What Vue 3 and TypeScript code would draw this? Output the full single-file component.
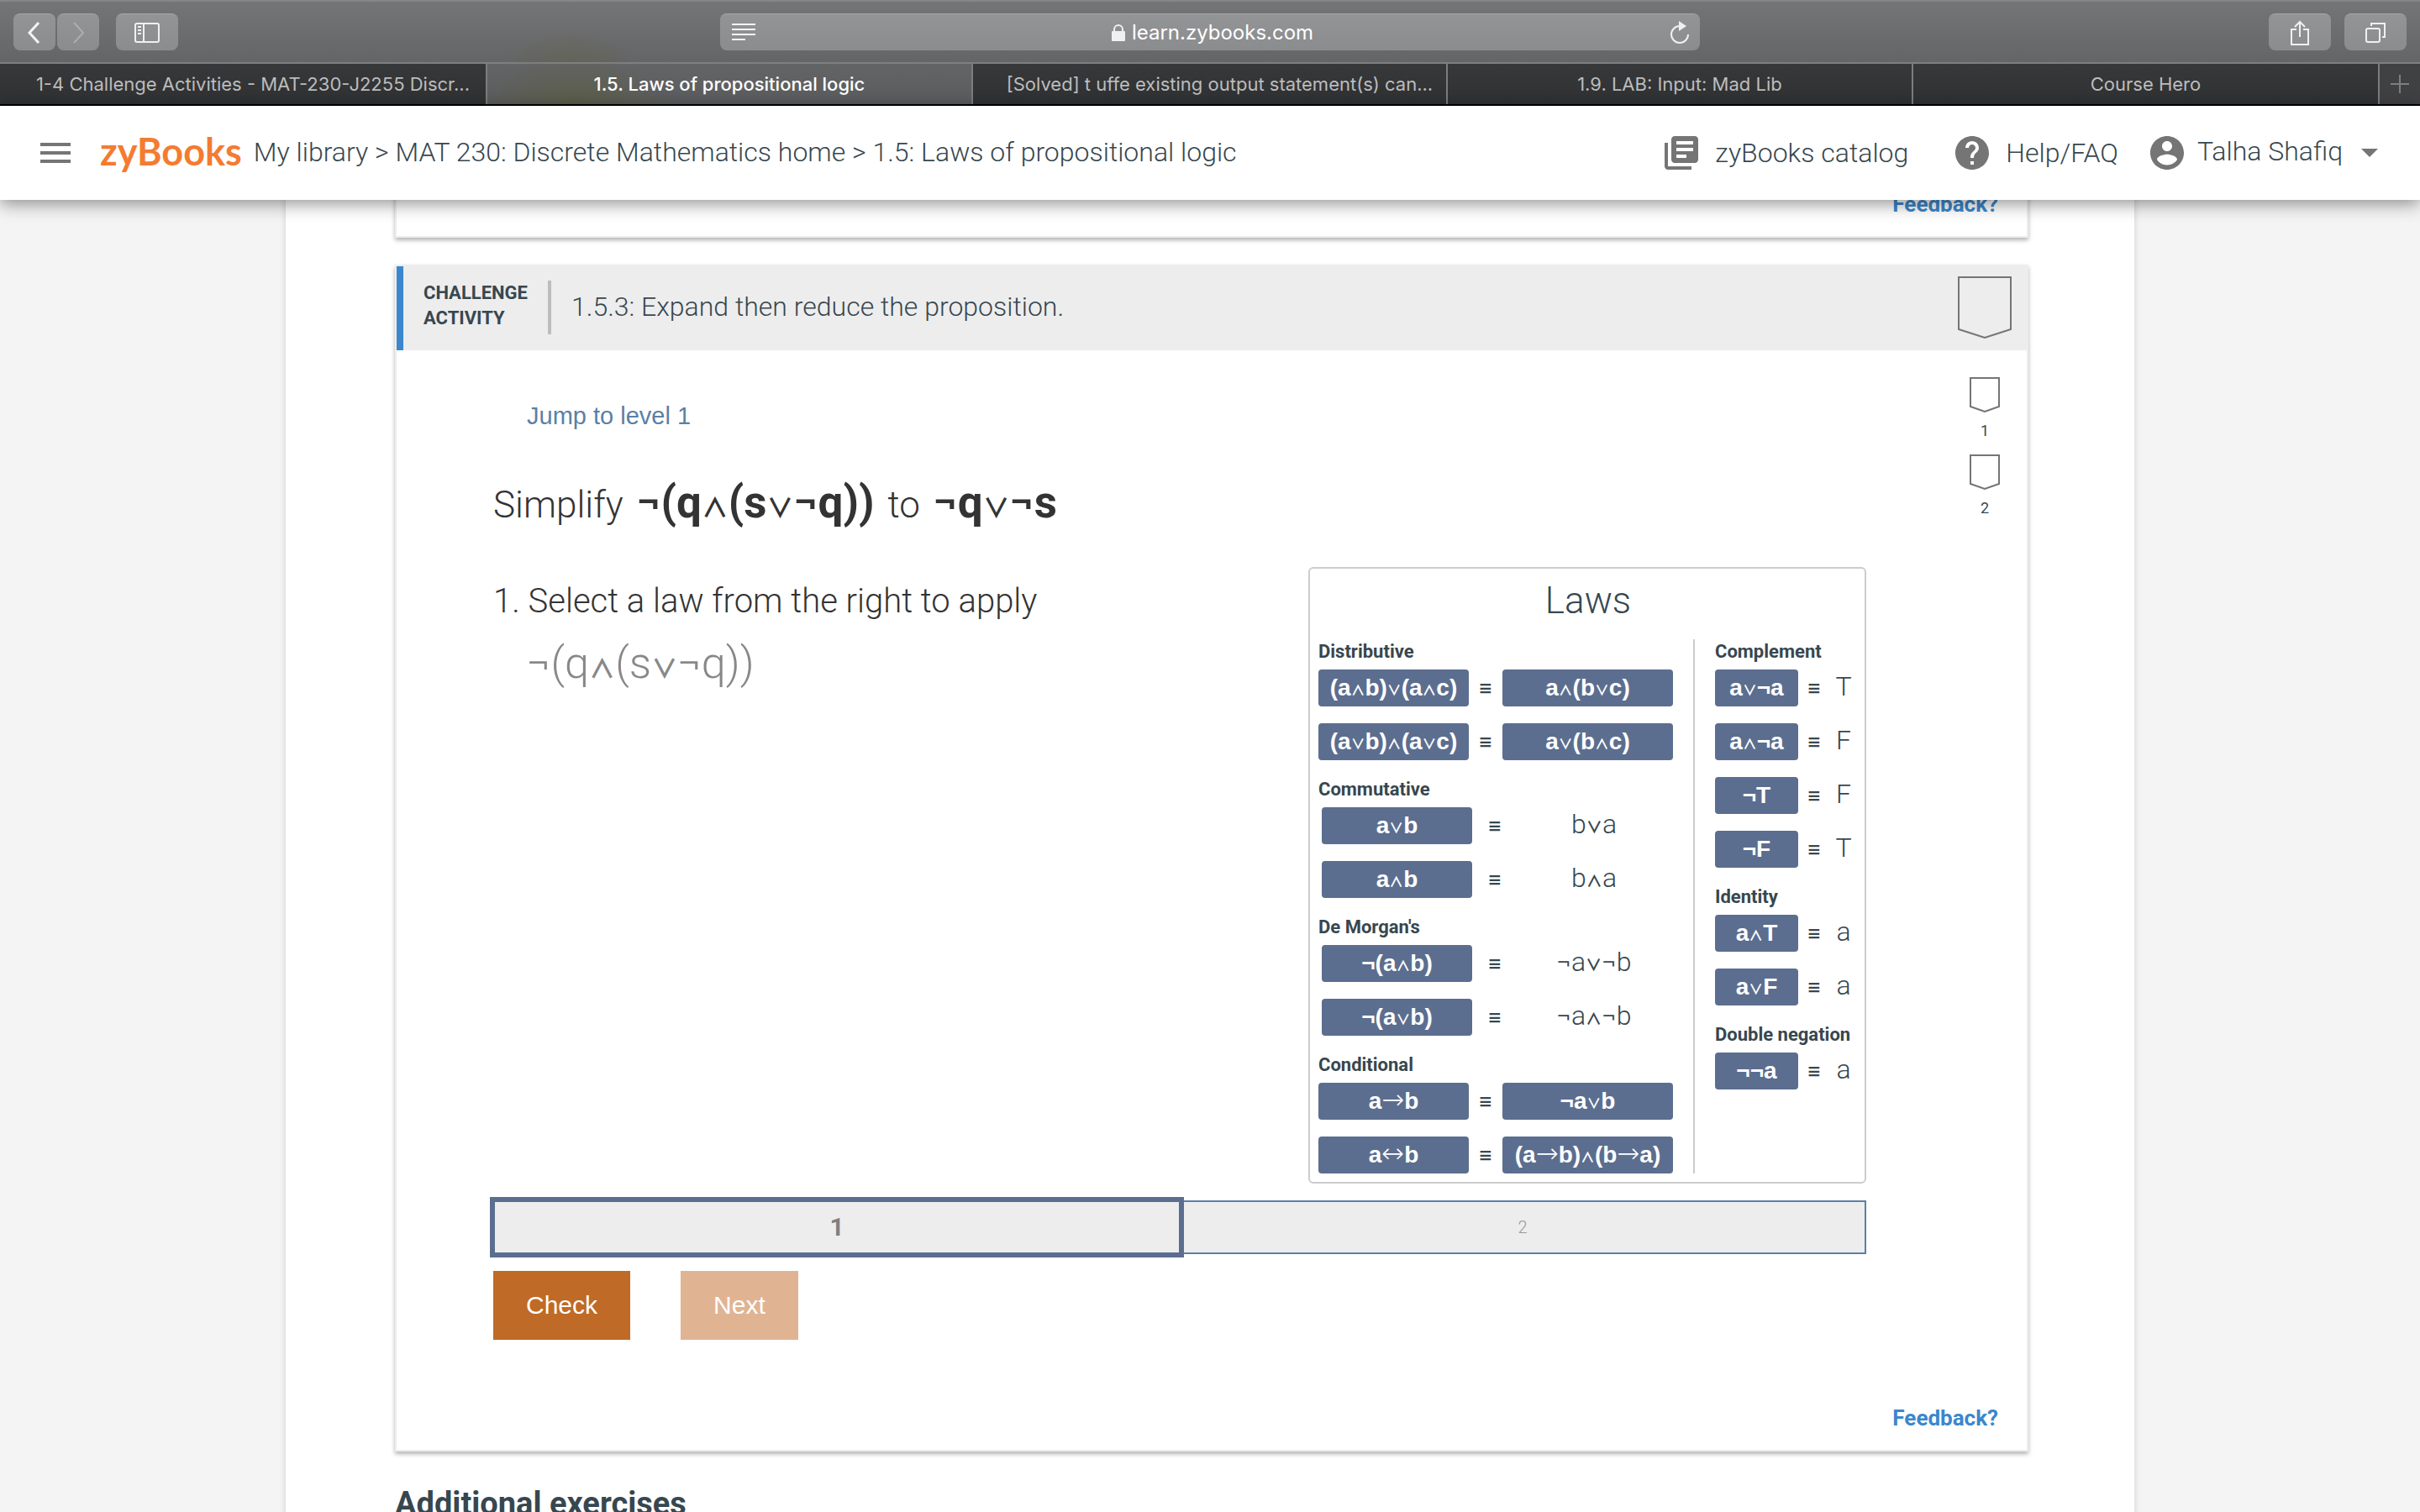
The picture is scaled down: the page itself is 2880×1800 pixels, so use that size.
<script setup lang="ts">
import { h, type FunctionalComponent } from 'vue'

interface Law {
  left: string
  right: string
  rightIsButton?: boolean
}
interface LawGroup {
  name: string
  laws: Law[]
}

const tabs: { title: string; grow: number; active?: boolean; long?: boolean }[] = [
  { title: '1-4 Challenge Activities - MAT-230-J2255 Discr...', grow: 580, long: true },
  { title: '1.5. Laws of propositional logic', grow: 578, active: true },
  { title: '[Solved] t uffe existing output statement(s) can...', grow: 565, long: true },
  { title: '1.9. LAB: Input: Mad Lib', grow: 554 },
  { title: 'Course Hero', grow: 555 },
]

const equivalences: LawGroup[] = [
  {
    name: 'Distributive',
    laws: [
      { left: '(a∧b)∨(a∧c)', right: 'a∧(b∨c)', rightIsButton: true },
      { left: '(a∨b)∧(a∨c)', right: 'a∨(b∧c)', rightIsButton: true },
    ],
  },
  {
    name: 'Commutative',
    laws: [
      { left: 'a∨b', right: 'b∨a' },
      { left: 'a∧b', right: 'b∧a' },
    ],
  },
  {
    name: "De Morgan's",
    laws: [
      { left: '¬(a∧b)', right: '¬a∨¬b' },
      { left: '¬(a∨b)', right: '¬a∧¬b' },
    ],
  },
  {
    name: 'Conditional',
    laws: [
      { left: 'a→b', right: '¬a∨b', rightIsButton: true },
      { left: 'a↔b', right: '(a→b)∧(b→a)', rightIsButton: true },
    ],
  },
]

const simplifications: LawGroup[] = [
  {
    name: 'Complement',
    laws: [
      { left: 'a∨¬a', right: 'T' },
      { left: 'a∧¬a', right: 'F' },
      { left: '¬T', right: 'F' },
      { left: '¬F', right: 'T' },
    ],
  },
  {
    name: 'Identity',
    laws: [
      { left: 'a∧T', right: 'a' },
      { left: 'a∨F', right: 'a' },
    ],
  },
  { name: 'Double negation', laws: [{ left: '¬¬a', right: 'a' }] },
]

// Connectives are set in a lighter symbol face than the variables around them.
const Expr: FunctionalComponent<{ value: string }> = (props) =>
  h(
    'span',
    { class: 'expr' },
    props.value
      .split(/([∧∨→↔])/)
      .filter((part) => part !== '')
      .map((part) => {
        if (/[∧∨]/.test(part)) return h('span', { class: 'op' }, part)
        if (/[→↔]/.test(part)) return h('span', { class: 'arrow' }, part)
        return part
      }),
  )
Expr.props = ['value']
</script>

<template>
  <div class="window">
    <div class="toolbar">
      <div class="tools">
        <div class="pair">
          <button class="tool narrow" aria-label="Back">
            <svg width="16" height="26" viewBox="0 0 16 26"><path d="M13 1L2 13l11 12" fill="none" stroke="#f4f4f4" stroke-width="3" /></svg>
          </button>
          <button class="tool narrow" aria-label="Forward">
            <svg width="16" height="26" viewBox="0 0 16 26"><path d="M3 1l11 12L3 25" fill="none" stroke="#adaeb0" stroke-width="2" /></svg>
          </button>
        </div>
        <button class="tool sidebar" aria-label="Show sidebar">
          <svg width="30" height="24" viewBox="0 0 30 24" fill="none" stroke="#f0f0f0" stroke-width="2">
            <rect x="1" y="1" width="28" height="22" rx="2" />
            <path d="M11 1v22M4 5h4M4 9h4M4 13h4" />
          </svg>
        </button>
      </div>
      <div class="address">
        <svg width="28" height="22" viewBox="0 0 28 22"><path d="M0 1h28M0 7h28M0 13h28M0 19h16" stroke="#f4f4f4" stroke-width="2" /></svg>
        <div class="host">
          <svg width="16" height="20" viewBox="0 0 16 20">
            <path d="M3 9V6a5 5 0 0 1 10 0v3" fill="none" stroke="#f0f0f0" stroke-width="2" />
            <rect x="0" y="8" width="16" height="12" rx="1" fill="#f0f0f0" />
          </svg>
          <span>learn.zybooks.com</span>
        </div>
        <svg width="24" height="28" viewBox="0 0 24 28">
          <path d="M12 6a10 10 0 1 0 10 10" fill="none" stroke="#f0f0f0" stroke-width="2" />
          <path d="M11 0l9 6-9 6z" fill="#f0f0f0" />
        </svg>
      </div>
      <div class="tools end">
        <button class="tool wide" aria-label="Share">
          <svg width="22" height="30" viewBox="0 0 22 30" fill="none" stroke="#f0f0f0" stroke-width="2">
            <path d="M7 11H1v18h20V11h-6M11 20V2M5 8l6-6 6 6" />
          </svg>
        </button>
        <button class="tool wide" aria-label="Show all tabs">
          <svg width="24" height="24" viewBox="0 0 24 24" fill="none" stroke="#f0f0f0" stroke-width="2">
            <rect x="1" y="7" width="16" height="16" rx="2" />
            <path d="M7 4V1h16v16h-3" />
          </svg>
        </button>
      </div>
    </div>

    <nav class="tabs" aria-label="Browser tabs">
      <button v-for="tab in tabs" :key="tab.title" class="tab" :class="{ active: tab.active }" :style="{ flexGrow: tab.grow }">
        <span :class="{ long: tab.long }">{{ tab.title }}</span>
      </button>
      <button class="tab add" aria-label="New tab">
        <svg width="22" height="22" viewBox="0 0 22 22"><path d="M11 0v22M0 11h22" stroke="#7d7e80" stroke-width="2" /></svg>
      </button>
    </nav>

    <header class="site">
      <button class="menu" aria-label="Menu">
        <svg width="36" height="24" viewBox="0 0 36 24"><path d="M0 2h36M0 12h36M0 22h36" stroke="#757575" stroke-width="4" /></svg>
      </button>
      <a class="logo" href="#">zyBooks</a>
      <div class="crumbs">
        <a href="#">My library</a> &gt; <a href="#">MAT 230: Discrete Mathematics home</a> &gt; <span>1.5: Laws of propositional logic</span>
      </div>
      <nav class="links">
        <a href="#" class="catalog">
          <svg width="48" height="48" viewBox="0 0 24 24"><path fill="#757575" d="M4 6H2v14c0 1.1.9 2 2 2h14v-2H4V6zm16-4H8c-1.1 0-2 .9-2 2v12c0 1.1.9 2 2 2h12c1.1 0 2-.9 2-2V4c0-1.1-.9-2-2-2zm-1 9H9V9h10v2zm-4 4H9v-2h6v2zm4-8H9V5h10v2z" /></svg>
          zyBooks catalog
        </a>
        <a href="#" class="help">
          <svg width="48" height="48" viewBox="0 0 24 24"><path fill="#757575" d="M12 2C6.48 2 2 6.48 2 12s4.48 10 10 10 10-4.48 10-10S17.52 2 12 2zm1 17h-2v-2h2v2zm2.07-7.75l-.9.92C13.45 12.9 13 13.5 13 15h-2v-.5c0-1.1.45-2.1 1.17-2.83l1.24-1.26c.37-.36.59-.86.59-1.41 0-1.1-.9-2-2-2s-2 .9-2 2H8c0-2.21 1.79-4 4-4s4 1.79 4 4c0 .88-.36 1.68-.93 2.25z" /></svg>
          Help/FAQ
        </a>
        <button class="user">
          <svg width="48" height="48" viewBox="0 0 24 24"><path fill="#757575" d="M12 2C6.48 2 2 6.48 2 12s4.48 10 10 10 10-4.48 10-10S17.52 2 12 2zm0 3c1.66 0 3 1.34 3 3s-1.34 3-3 3-3-1.34-3-3 1.34-3 3-3zm0 14.2c-2.5 0-4.71-1.28-6-3.22.03-1.99 4-3.08 6-3.08 1.99 0 5.97 1.09 6 3.08-1.29 1.94-3.5 3.22-6 3.22z" /></svg>
          <span>Talha Shafiq</span>
          <svg class="caret" width="20" height="10" viewBox="0 0 20 10"><path d="M0 0h20L10 10z" fill="#757575" /></svg>
        </button>
      </nav>
    </header>

    <div class="viewport">
      <main class="column">
        <section class="card previous">
          <a class="feedback" href="#">Feedback?</a>
        </section>

        <section class="card">
          <div class="card-head">
            <h2 class="kind">CHALLENGE<br />ACTIVITY</h2>
            <h3 class="title">1.5.3: Expand then reduce the proposition.</h3>
            <svg class="badge" width="64" height="74" viewBox="0 0 64 74"><path d="M1 1h62v62L32 73 1 63z" fill="none" stroke="#757575" stroke-width="2" /></svg>
          </div>
          <div class="card-body">
            <div class="activity">
              <a class="jump" href="#">Jump to level 1</a>
              <p class="goal">Simplify <Expr class="strong" value="¬(q∧(s∨¬q))" /> to <Expr class="strong" value="¬q∨¬s" /></p>
              <div class="work">
                <div class="step">
                  <p class="prompt">1. Select a law from the right to apply</p>
                  <p class="current"><Expr value="¬(q∧(s∨¬q))" /></p>
                </div>
                <div class="laws">
                  <h4 class="laws-title">Laws</h4>
                  <div class="laws-columns">
                    <div class="laws-left">
                      <div v-for="group in equivalences" :key="group.name" class="group">
                        <h5>{{ group.name }}</h5>
                        <div v-for="law in group.laws" :key="law.left" class="law" :class="{ plain: !law.rightIsButton }">
                          <button class="choice"><Expr :value="law.left" /></button>
                          <span class="equiv">≡</span>
                          <button v-if="law.rightIsButton" class="choice"><Expr :value="law.right" /></button>
                          <span v-else class="result"><Expr :value="law.right" /></span>
                        </div>
                      </div>
                    </div>
                    <div class="laws-right">
                      <div v-for="group in simplifications" :key="group.name" class="group">
                        <h5>{{ group.name }}</h5>
                        <div v-for="law in group.laws" :key="law.left" class="law short">
                          <button class="choice"><Expr :value="law.left" /></button>
                          <span class="equiv">≡</span>
                          <span class="result">{{ law.right }}</span>
                        </div>
                      </div>
                    </div>
                  </div>
                </div>
              </div>
              <div class="levels">
                <div class="level now">1</div>
                <div class="level">2</div>
              </div>
              <div class="actions">
                <button class="action">Check</button>
                <button class="action off" disabled>Next</button>
              </div>
            </div>
            <div class="marks">
              <div v-for="n in 2" :key="n" class="mark">
                <svg width="36" height="42" viewBox="0 0 36 42"><path d="M1 1h34v34l-17 6-17-6z" fill="none" stroke="#757575" stroke-width="2" /></svg>
                <span>{{ n }}</span>
              </div>
            </div>
          </div>
          <a class="feedback" href="#">Feedback?</a>
        </section>

        <h2 class="extra">Additional exercises</h2>
      </main>
    </div>
  </div>
</template>

<style>
body {
  margin: 0;
  overflow: hidden;
}
.expr {
  white-space: nowrap;
}
.expr .op {
  font-family: 'Noto Sans CJK SC', sans-serif;
  font-weight: 700;
  font-size: 0.6em;
  line-height: 1;
}
.expr .arrow {
  font-family: 'DejaVu Sans', sans-serif;
  font-weight: 200;
  font-size: 1.15em;
  line-height: 1;
}
</style>

<style scoped>
.window {
  display: flex;
  flex-direction: column;
  height: 100vh;
  overflow: hidden;
  background: #f4f4f4;
  color: #37474f;
  font-family: Roboto, sans-serif;
  font-weight: 300;
}
.window * {
  box-sizing: border-box;
}
button {
  margin: 0;
  padding: 0;
  border: 0;
  background: none;
  color: inherit;
  font: inherit;
}
a {
  color: inherit;
  text-decoration: none;
}
svg {
  display: block;
  flex: none;
}
h2,
h3,
h4,
h5,
p {
  margin: 0;
}

/* Browser chrome */
.toolbar {
  display: flex;
  flex: none;
  justify-content: space-between;
  align-items: center;
  height: 76px;
  padding: 0 16px;
  border-top: 2px solid #858688;
  border-bottom: 2px solid #7d7f80;
  background: radial-gradient(ellipse 90px 60px at 680px 90px, rgba(96, 98, 62, 0.5), transparent), linear-gradient(#747577, #646567);
}
.tools {
  display: flex;
  flex: 1;
  gap: 20px;
}
.tools.end {
  justify-content: flex-end;
  gap: 16px;
}
.pair {
  display: flex;
  gap: 2px;
}
.tool {
  display: flex;
  align-items: center;
  justify-content: center;
  height: 44px;
  border-radius: 8px;
  border-top: 1px solid #a6a7a9;
  background: linear-gradient(#939496, #8b8c8e);
}
.narrow {
  width: 50px;
}
.sidebar,
.wide {
  width: 74px;
}
.address {
  display: flex;
  align-items: center;
  justify-content: space-between;
  flex: 0 1 1166px;
  height: 44px;
  padding: 0 12px 0 14px;
  border-radius: 8px;
  border-top: 1px solid #a6a7a9;
  background: linear-gradient(#939496, #8b8c8e);
}
.host {
  display: flex;
  align-items: center;
  gap: 8px;
  color: #fff;
  font: 400 24px/32px Inter, sans-serif;
}
.tabs {
  display: flex;
  flex: none;
  height: 50px;
  border-bottom: 2px solid #000;
}
.tab {
  flex: 1 1 0;
  min-width: 0;
  overflow: hidden;
  border-right: 2px solid #7c7d7f;
  background: linear-gradient(#363839, #303133);
  color: #bcbcbd;
  font: 400 22px/46px Inter, sans-serif;
  white-space: nowrap;
}
.long {
  padding-left: 24px;
}
.tab.active {
  background: radial-gradient(ellipse 110px 60px at 18% 100%, rgba(92, 95, 60, 0.6), transparent), linear-gradient(#636466, #5b5c5e);
  color: #fff;
  font-weight: 500;
}
.tab.add {
  display: flex;
  flex: 0 0 48px;
  align-items: center;
  justify-content: center;
  border-right: 0;
  background: #404143;
}

/* Site header */
.site {
  position: relative;
  z-index: 1;
  display: flex;
  flex: none;
  align-items: center;
  height: 112px;
  padding: 0 50px 0 48px;
  background: #fff;
  box-shadow: 0 4px 20px rgba(0, 0, 0, 0.45);
  font-size: 32px;
  line-height: 48px;
}
.logo {
  margin-left: 35px;
  padding-bottom: 4px;
  color: #f47b30;
  font: 700 45px/48px Lato, sans-serif;
}
.crumbs {
  flex: 1;
  margin-left: 14px;
  padding-bottom: 2px;
  white-space: nowrap;
}
.links {
  display: flex;
  align-items: center;
}
.links a,
.user {
  display: flex;
  align-items: center;
  gap: 16px;
  white-space: nowrap;
}
.help {
  margin-left: 52px;
}
.links .user {
  gap: 12px;
  margin-left: 34px;
}
.user span {
  padding-bottom: 4px;
}
.caret {
  margin-left: 10px;
}

/* Page */
.viewport {
  flex: 1;
  min-height: 0;
  overflow: hidden;
}
.column {
  max-width: 2200px;
  min-height: 100%;
  margin: -10px auto 0;
  padding: 0 126px 0 130px;
  box-sizing: border-box;
  background: #fff;
  box-shadow: 0 0 8px rgba(0, 0, 0, 0.15);
}
.card {
  display: flex;
  flex-direction: column;
  margin-bottom: 32px;
  border: 2px solid #ededed;
  background: #fff;
  box-shadow: 0 3px 5px rgba(0, 0, 0, 0.3);
}
.card.previous {
  border-top: 0;
}
.feedback {
  align-self: flex-end;
  margin: 0 34px 22px 0;
  color: #3a87cd;
  font-size: 26px;
  font-weight: 700;
  line-height: 31px;
}
.card-head {
  display: flex;
  align-items: center;
  height: 100px;
  padding: 0 18px 2px 24px;
  border-left: 8px solid #3a87cd;
  background: #ededed;
}
.kind {
  padding: 0 24px 4px 0;
  border-right: 4px solid #bdbdbd;
  font-size: 22px;
  font-weight: 700;
  line-height: 30px;
}
.title {
  flex: 1;
  margin-left: 24px;
  padding-bottom: 2px;
  font-size: 32px;
  font-weight: 300;
  line-height: 48px;
}
.card-body {
  display: flex;
  gap: 123px;
  padding: 0 32px 78px 115px;
}
.activity {
  flex: 1;
  min-width: 0;
  padding-top: 58px;
}
.jump {
  display: block;
  margin-left: 40px;
  color: #5b80a5;
  font: 400 29px/40px 'Liberation Sans', sans-serif;
}
.goal {
  margin-top: 56px;
  color: #333;
  font-size: 44px;
  line-height: 60px;
}
.strong {
  margin: 0 5px;
  font-size: 53px;
  font-weight: 700;
  line-height: 40px;
}
.work {
  display: flex;
  justify-content: space-between;
  margin-top: 44px;
}
.step {
  padding-top: 17px;
}
.prompt {
  color: #333;
  font-size: 40px;
  line-height: 48px;
}
.current {
  margin: 20px 0 0 40px;
  color: #888;
  font-size: 52px;
  line-height: 60px;
}
.laws {
  flex: 0 0 664px;
  padding: 0 8px 10px 10px;
  border: 2px solid #ccc;
  border-radius: 6px;
}
.laws-title {
  padding-bottom: 8px;
  font-size: 44px;
  font-weight: 300;
  line-height: 76px;
  text-align: center;
}
.laws-columns {
  display: flex;
}
.laws-left {
  padding-right: 24px;
  border-right: 2px solid #ccc;
}
.laws-right {
  padding-left: 24px;
}
.group + .group {
  margin-top: 20px;
}
h5 {
  padding-bottom: 6px;
  font-size: 22px;
  font-weight: 700;
  line-height: 30px;
  white-space: nowrap;
}
.law {
  display: grid;
  grid-template-columns: 179px 40px 203px;
  align-items: center;
  height: 44px;
  text-align: center;
}
.law + .law {
  margin-top: 20px;
}
.law.plain {
  grid-template-columns: 179px 54px 182px;
  padding-left: 4px;
}
.law.short {
  grid-template-columns: 99px 38px 32px;
}
.choice {
  height: 44px;
  border-radius: 4px;
  background: #5c6e8f;
  color: #fff;
  font: 700 28px/44px 'Liberation Sans', sans-serif;
}
.equiv {
  font: 700 20px/44px 'DejaVu Sans', sans-serif;
}
.result {
  padding-bottom: 4px;
  font-size: 32px;
  line-height: 40px;
}
.levels {
  display: flex;
  height: 64px;
  margin-top: 20px;
}
.level {
  flex: 1 1 0;
  border: 2px solid #5b80a5;
  border-left: 0;
  background: #ededed;
  color: #999;
  font-size: 20px;
  line-height: 60px;
  text-align: center;
}
.level.now {
  position: relative;
  border: 2px solid #5c6e8f;
  box-shadow: 0 0 0 4px #5c6e8f;
  color: #808080;
  font-size: 30px;
  font-weight: 700;
}
.actions {
  display: flex;
  gap: 60px;
  margin-top: 20px;
}
.action {
  height: 82px;
  padding: 0 39px;
  background: #bf6a26;
  color: #fff;
  font: 400 30px/82px 'Liberation Sans', sans-serif;
}
.action.off {
  background: #e0b493;
}
.marks {
  padding-top: 32px;
}
.mark {
  display: flex;
  flex-direction: column;
  align-items: center;
  height: 92px;
  font-size: 18px;
  font-weight: 400;
}
.mark span {
  margin-top: 10px;
  line-height: 24px;
}
.extra {
  padding-top: 6px;
  font-size: 38px;
  font-weight: 700;
  line-height: 48px;
}
</style>
